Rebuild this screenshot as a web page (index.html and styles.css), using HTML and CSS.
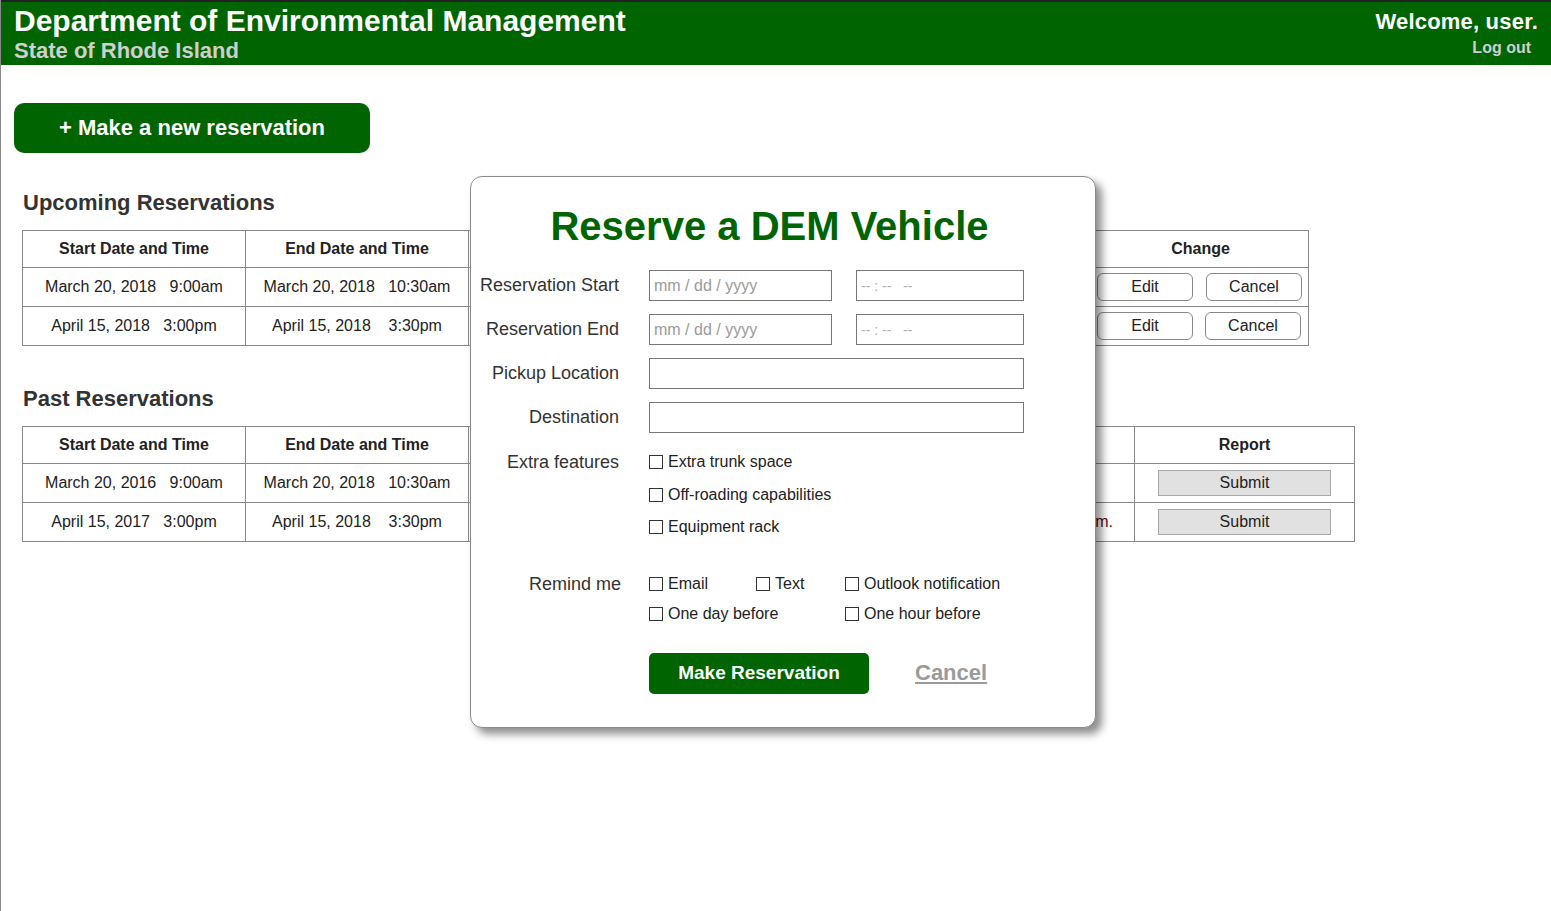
FILE: index.html
```html
<!DOCTYPE html>
<html lang="en">
<head>
<meta charset="utf-8">
<title>DEM Vehicle Reservations</title>
<link rel="stylesheet" href="styles.css">
</head>
<body>
<div class="page">
  <header class="topbar">
    <div class="brand">
      <div class="brand-title">Department of Environmental Management</div>
      <div class="brand-sub">State of Rhode Island</div>
    </div>
    <div class="account">
      <div class="welcome">Welcome, user.</div>
      <a class="logout" href="#">Log out</a>
    </div>
  </header>

  <main class="content">
    <button class="new-btn">+ Make a new reservation</button>

    <h2 class="section-title upcoming-title">Upcoming Reservations</h2>
    <table class="res-table upcoming">
      <colgroup>
        <col class="c-date"><col class="c-date"><col class="c-mid-u"><col class="c-mid-u"><col class="c-mid-u"><col class="c-change">
      </colgroup>
      <thead>
        <tr><th>Start Date and Time</th><th>End Date and Time</th><th></th><th></th><th></th><th>Change</th></tr>
      </thead>
      <tbody>
        <tr>
          <td>March 20, 2018&nbsp;&nbsp;&nbsp;9:00am</td>
          <td>March 20, 2018&nbsp;&nbsp;&nbsp;10:30am</td>
          <td></td><td></td><td></td>
          <td><div class="change-btns"><button class="outline-btn edit">Edit</button><button class="outline-btn cancel">Cancel</button></div></td>
        </tr>
        <tr>
          <td>April 15, 2018&nbsp;&nbsp;&nbsp;3:00pm</td>
          <td>April 15, 2018&nbsp;&nbsp;&nbsp;&nbsp;3:30pm</td>
          <td></td><td></td><td></td>
          <td><div class="change-btns second"><button class="outline-btn edit">Edit</button><button class="outline-btn cancel">Cancel</button></div></td>
        </tr>
      </tbody>
    </table>

    <h2 class="section-title past-title">Past Reservations</h2>
    <table class="res-table past">
      <colgroup>
        <col class="c-date"><col class="c-date"><col class="c-mid-p"><col class="c-mid-p"><col class="c-mid-p"><col class="c-report">
      </colgroup>
      <thead>
        <tr><th>Start Date and Time</th><th>End Date and Time</th><th></th><th></th><th></th><th>Report</th></tr>
      </thead>
      <tbody>
        <tr>
          <td>March 20, 2016&nbsp;&nbsp;&nbsp;9:00am</td>
          <td>March 20, 2018&nbsp;&nbsp;&nbsp;10:30am</td>
          <td></td><td></td><td class="comment"></td>
          <td><button class="submit-btn">Submit</button></td>
        </tr>
        <tr>
          <td>April 15, 2017&nbsp;&nbsp;&nbsp;3:00pm</td>
          <td>April 15, 2018&nbsp;&nbsp;&nbsp;&nbsp;3:30pm</td>
          <td></td><td></td><td class="comment">Late, 4pm.</td>
          <td><button class="submit-btn">Submit</button></td>
        </tr>
      </tbody>
    </table>
  </main>

  <div class="modal">
    <h1 class="modal-title">Reserve a DEM Vehicle</h1>
    <form class="modal-form">
      <div class="frow">
        <label class="flabel">Reservation Start</label>
        <input class="finput date" type="text" placeholder="mm / dd / yyyy">
        <input class="finput time" type="text" placeholder="-- : --&nbsp;&nbsp;&nbsp;--">
      </div>
      <div class="frow">
        <label class="flabel">Reservation End</label>
        <input class="finput date" type="text" placeholder="mm / dd / yyyy">
        <input class="finput time" type="text" placeholder="-- : --&nbsp;&nbsp;&nbsp;--">
      </div>
      <div class="frow">
        <label class="flabel">Pickup Location</label>
        <input class="finput wide" type="text">
      </div>
      <div class="frow">
        <label class="flabel">Destination</label>
        <input class="finput wide" type="text">
      </div>

      <div class="fgroup extras">
        <div class="flabel glabel">Extra features</div>
        <div class="checks">
          <label class="check"><input type="checkbox">Extra trunk space</label>
          <label class="check"><input type="checkbox">Off-roading capabilities</label>
          <label class="check"><input type="checkbox">Equipment rack</label>
        </div>
      </div>

      <div class="fgroup remind">
        <div class="flabel glabel remind-label">Remind me</div>
        <div class="remind-grid">
          <label class="check"><input type="checkbox">Email</label>
          <label class="check"><input type="checkbox">Text</label>
          <label class="check"><input type="checkbox">Outlook notification</label>
          <label class="check span2"><input type="checkbox">One day before</label>
          <label class="check"><input type="checkbox">One hour before</label>
        </div>
      </div>

      <div class="actions">
        <button type="button" class="make-btn">Make Reservation</button>
        <a class="cancel-link" href="#">Cancel</a>
      </div>
    </form>
  </div>
</div>
</body>
</html>
```

FILE: styles.css
```css
* { box-sizing: border-box; }

html, body {
  margin: 0;
  padding: 0;
  background: #fff;
  font-family: "Liberation Sans", Arial, sans-serif;
  color: #222;
}

.page {
  position: relative;
  min-height: 100vh;
  border-left: 1px solid #8a8a8a;
}

/* Header */
.topbar {
  display: flex;
  justify-content: space-between;
  align-items: flex-start;
  background: #006400;
  border-top: 2px solid #222;
  height: 65px;
  padding: 2px 13px 0 13px;
}
.brand-title {
  color: #fff;
  font-weight: bold;
  font-size: 30px;
  line-height: 34px;
}
.brand-sub {
  color: #cfcfcf;
  font-weight: bold;
  font-size: 22px;
  line-height: 26px;
}
.account {
  display: flex;
  flex-direction: column;
  align-items: flex-end;
  padding-top: 5px;
}
.welcome {
  color: #fff;
  font-weight: bold;
  font-size: 22px;
  line-height: 26px;
  letter-spacing: 0.2px;
}
.logout {
  color: #cfcfcf;
  font-weight: bold;
  font-size: 16px;
  line-height: 20px;
  text-decoration: none;
  margin-top: 3px;
  margin-right: 7px;
}

/* Content */
.content {
  padding: 38px 0 0 13px;
}
.new-btn {
  display: block;
  width: 356px;
  height: 50px;
  background: #006400;
  color: #fff;
  border: none;
  border-radius: 10px;
  font-family: "Liberation Sans", Arial, sans-serif;
  font-weight: bold;
  font-size: 22px;
  cursor: pointer;
}
.section-title {
  margin: 0 0 14px 9px;
  font-size: 22px;
  line-height: 26px;
  font-weight: bold;
  color: #333;
}
.upcoming-title { margin-top: 37px; }
.past-title { margin-top: 40px; }

.res-table {
  margin-left: 8px;
  border-collapse: collapse;
  table-layout: fixed;
  color: #222;
  font-size: 16px;
}
.res-table.upcoming { width: 1286px; }
.res-table.past { width: 1332px; }
.c-date { width: 223px; }
.c-mid-u { width: 208px; }
.c-change { width: 216px; }
.c-mid-p { width: 222px; }
.c-report { width: 220px; }

.res-table th,
.res-table td {
  border: 1px solid #888;
  text-align: center;
  padding: 0 4px;
  white-space: nowrap;
  overflow: hidden;
}
.res-table th {
  height: 37px;
  font-weight: bold;
  color: #222;
}
.res-table td { height: 39px; }
.res-table td.comment {
  text-align: right;
  padding-right: 21px;
  color: #5a0a0a;
}

.change-btns {
  display: flex;
  justify-content: flex-start;
  gap: 13px;
  padding-left: 0;
}
.change-btns.second { gap: 12px; }
.outline-btn {
  height: 28px;
  width: 96px;
  background: #fff;
  border: 1px solid #888;
  border-radius: 6px;
  font-family: "Liberation Sans", Arial, sans-serif;
  font-size: 16px;
  color: #222;
}
.submit-btn {
  width: 173px;
  height: 26px;
  background: #e1e1e1;
  border: 1px solid #a8a8a8;
  border-radius: 0;
  font-family: "Liberation Sans", Arial, sans-serif;
  font-size: 16px;
  color: #222;
}

/* Modal */
.modal {
  position: absolute;
  left: 469px;
  top: 176px;
  width: 626px;
  height: 552px;
  background: #fff;
  border: 1px solid #8a8a8a;
  border-radius: 12px;
  box-shadow: 6px 6px 9px rgba(0, 0, 0, 0.45);
  padding-top: 25px;
}
.modal-title {
  margin: 0;
  text-align: center;
  color: #006400;
  font-size: 40px;
  line-height: 48px;
  font-weight: bold;
  padding-right: 27px;
}
.modal-form {
  margin-top: 20px;
}
.frow {
  display: flex;
  align-items: center;
  height: 31px;
  margin-bottom: 13px;
}
.flabel {
  width: 148px;
  flex: none;
  text-align: right;
  font-size: 18px;
  color: #333;
  margin-right: 30px;
}
.finput {
  height: 31px;
  border: 1px solid #777;
  border-radius: 0;
  padding: 0 4px;
  font-family: "Liberation Sans", Arial, sans-serif;
  font-size: 16px;
  color: #222;
  outline: none;
}
.finput::placeholder { color: #9a9a9a; }
.finput.date { width: 183px; }
.finput.time {
  width: 168px;
  margin-left: 24px;
  font-size: 14px;
}
.finput.time::placeholder { color: #b0b0b0; }
.finput.wide { width: 375px; }

.fgroup {
  display: flex;
  align-items: flex-start;
}
.extras { margin-top: 4px; }
.glabel { line-height: 32px; }
.checks {
  display: flex;
  flex-direction: column;
}
.check {
  display: flex;
  align-items: center;
  font-size: 16px;
  color: #222;
  height: 32.5px;
  white-space: nowrap;
}
.check input {
  -webkit-appearance: none;
  appearance: none;
  width: 14px;
  height: 14px;
  margin: 0 5px 0 0;
  border: 1px solid #333;
  background: #fff;
  border-radius: 0;
  flex: none;
}

.remind { margin-top: 25px; }
.remind .glabel { line-height: 30px; width: 150px; margin-right: 28px; }
.remind-grid {
  display: grid;
  grid-template-columns: 107px 89px auto;
}
.remind-grid .check { height: 30px; }
.remind-grid .span2 { grid-column: 1 / span 2; }

.actions {
  display: flex;
  align-items: center;
  margin-top: 24px;
  padding-left: 178px;
}
.make-btn {
  width: 220px;
  height: 41px;
  background: #006400;
  color: #fff;
  border: none;
  border-radius: 5px;
  font-family: "Liberation Sans", Arial, sans-serif;
  font-weight: bold;
  font-size: 19px;
}
.cancel-link {
  margin-left: 46px;
  color: #9a9a9a;
  font-weight: bold;
  font-size: 22px;
  text-decoration: underline;
}
```
